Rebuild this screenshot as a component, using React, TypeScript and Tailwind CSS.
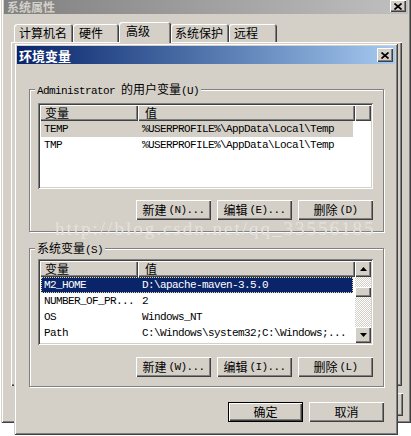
import React from "react";

const frame =
  "shadow-[inset_1px_1px_#d4d0c8,inset_-1px_-1px_#404040,inset_2px_2px_#fff,inset_-2px_-2px_#808080]";
const raised =
  "shadow-[inset_1px_1px_#fff,inset_-1px_-1px_#404040,inset_-2px_-2px_#808080]";
const defBtn =
  "shadow-[inset_0_0_0_1px_#000,inset_2px_2px_#fff,inset_-2px_-2px_#404040,inset_-3px_-3px_#808080]";
const sunken =
  "shadow-[inset_1px_1px_#808080,inset_-1px_-1px_#fff,inset_2px_2px_#404040,inset_-2px_-2px_#d4d0c8]";
const mono = "font-['Liberation_Mono',monospace] text-[11px] tracking-[-0.6px]";

const CloseBtn = ({ h = "h-[14px]" }: { h?: string }) => (
  <div className={`flex ${h} w-[16px] items-center justify-center bg-[#d4d0c8] ${raised}`}>
    <svg width="8" height="7" viewBox="0 0 8 7">
      <path d="M0.5 0.5L7.5 6.5M7.5 0.5L0.5 6.5" stroke="#000" strokeWidth="1.7" />
    </svg>
  </div>
);

type BtnProps = { label: string; hot?: string; ell?: boolean; def?: boolean };

const Btn = ({ label, hot, ell, def }: BtnProps) => (
  <div
    className={`flex h-[20px] w-[75px] items-center justify-center bg-[#d4d0c8] leading-none ${
      def ? defBtn : raised
    }`}
  >
    <span>{label}</span>
    {hot && (
      <span className={`ml-[2px] ${mono}`}>
        ({hot}){ell ? "..." : ""}
      </span>
    )}
  </div>
);

const Arrow = ({ down }: { down?: boolean }) => (
  <div className={`flex h-[16px] w-[16px] items-center justify-center bg-[#d4d0c8] ${raised}`}>
    <svg width="7" height="4" viewBox="0 0 7 4">
      <polygon points={down ? "0,0 7,0 3.5,4" : "0,4 7,4 3.5,0"} fill="#000" />
    </svg>
  </div>
);

type ListProps = { rows: string[][]; focused?: boolean; scroll?: boolean };

const ListView = ({ rows, focused, scroll }: ListProps) => (
  <div className={`ml-[8px] flex h-[86px] w-[335px] bg-white p-[2px] ${sunken}`}>
    <div className="flex min-w-0 flex-1 flex-col overflow-hidden">
      <div className="flex h-[16px] shrink-0 bg-[#d4d0c8] leading-[16px]">
        <div className={`w-[98px] pl-[5px] ${raised}`}>变量</div>
        <div className={`w-[217px] pl-[7px] ${raised}`}>值</div>
        {!scroll && <div className={`flex-1 ${raised}`} />}
      </div>
      {rows.map((r, i) => {
        let bg = "";
        if (i === 0) {
          bg = focused
            ? "bg-[#0a246a] text-white outline-1 outline-dotted outline-[#e8d8a0] -outline-offset-1"
            : "bg-[#d4d0c8]";
        }
        return (
          <div
            key={r[0]}
            className={`ml-[1px] flex h-[16px] w-[312px] shrink-0 items-center whitespace-nowrap ${mono} ${bg}`}
          >
            <div className="w-[101px] pl-[3px]">{r[0]}</div>
            <div>{r[1]}</div>
          </div>
        );
      })}
    </div>
    {scroll && (
      <div className="flex w-[16px] flex-col bg-[repeating-conic-gradient(#d4d0c8_0_25%,#fff_0_50%)] bg-[length:2px_2px]">
        <Arrow />
        <div className={`mt-[10px] h-[10px] w-[16px] bg-[#d4d0c8] ${raised}`} />
        <div className="flex-1" />
        <Arrow down />
      </div>
    )}
  </div>
);

const Group = ({
  label,
  children,
  className,
}: {
  label: React.ReactNode;
  children: React.ReactNode;
  className: string;
}) => (
  <div
    className={`relative border border-[#808080] shadow-[inset_1px_1px_#fff,1px_1px_#fff] ${className}`}
  >
    <div className="absolute -top-[8px] left-[5px] bg-[#d4d0c8] px-[2px] leading-[14px] whitespace-nowrap">
      {label}
    </div>
    {children}
  </div>
);

const userRows = [
  ["TEMP", "%USERPROFILE%\\AppData\\Local\\Temp"],
  ["TMP", "%USERPROFILE%\\AppData\\Local\\Temp"],
];

const sysRows = [
  ["M2_HOME", "D:\\apache-maven-3.5.0"],
  ["NUMBER_OF_PR...", "2"],
  ["OS", "Windows_NT"],
  ["Path", "C:\\Windows\\system32;C:\\Windows;..."],
];

const tabs = [
  { t: "计算机名", w: "w-[59px] pl-[5px]" },
  { t: "硬件", w: "w-[46px] pl-[6px]" },
  { t: "高级", w: "w-[52px] pl-[7px]", sel: true },
  { t: "系统保护", w: "w-[58px] pl-[4px]" },
  { t: "远程", w: "w-[48px] pl-[5px]" },
];

export default function App() {
  return (
    <div className="relative h-[436px] w-[411px] overflow-hidden bg-white font-['Noto_Sans_CJK_SC',sans-serif] text-[12px] text-black">
      {/* 系统属性 (inactive, behind) */}
      <div className="absolute left-[1px] top-0 flex h-[423px] w-[410px] flex-col bg-[#d4d0c8] px-[3px] pb-[3px] shadow-[inset_1px_0_#d4d0c8,inset_-1px_-1px_#404040,inset_2px_0_#fff,inset_-2px_-2px_#808080]">
        <div className="flex h-[14px] shrink-0 items-start justify-between bg-gradient-to-r from-[#808080] to-[#c0c0c0] pl-[3px] pr-[2px]">
          <span className="mt-[1px] text-[12px] font-bold leading-[12px] text-[#d4d0c8]">系统属性</span>
          <CloseBtn h="h-[12px]" />
        </div>
        <div className="ml-[10px] mt-[8px] flex h-[20px] items-end">
          {tabs.map((tab) => (
            <div
              key={tab.t}
              className={`rounded-t-[3px] bg-[#d4d0c8] leading-[18px] shadow-[inset_1px_1px_#fff,inset_-1px_0_#404040,inset_-2px_0_#808080] ${tab.w} ${
                tab.sel ? "relative z-10 -mb-[1px] h-[21px]" : "h-[18px]"
              }`}
            >
              {tab.t}
            </div>
          ))}
        </div>
        <div className={`ml-[7px] h-[344px] w-[391px] ${raised}`} />
        <div className="mt-[7px] flex justify-end pr-[5px]">
          <div className={`h-[23px] w-[75px] ${raised}`} />
        </div>
      </div>

      {/* 环境变量 */}
      <div className={`absolute left-[14px] top-[43px] flex h-[392px] w-[384px] flex-col bg-[#d4d0c8] p-[3px] ${frame}`}>
        <div className="flex h-[18px] shrink-0 items-center justify-between bg-gradient-to-r from-[#0a246a] to-[#a6caf0] pl-[2px] pr-[2px]">
          <span className="text-[13px] font-bold leading-none text-white">环境变量</span>
          <CloseBtn />
        </div>
        <div className="flex flex-col pl-[12px] pr-[11px]">
          <Group
            className="mt-[25px] h-[143px] pt-[13px]"
            label={
              <>
                <span className={mono}>Administrator </span>的用户变量<span className={mono}>(U)</span>
              </>
            }
          >
            <ListView rows={userRows} />
            <div className="mt-[11px] flex justify-end gap-[6px] pr-[10px]">
              <Btn label="新建" hot="N" ell />
              <Btn label="编辑" hot="E" ell />
              <Btn label="删除" hot="D" />
            </div>
          </Group>
          <Group
            className="mt-[16px] h-[139px] pt-[10px]"
            label={
              <>
                系统变量<span className={mono}>(S)</span>
              </>
            }
          >
            <ListView rows={sysRows} focused scroll />
            <div className="mt-[12px] flex justify-end gap-[6px] pr-[10px]">
              <Btn label="新建" hot="W" ell />
              <Btn label="编辑" hot="I" ell />
              <Btn label="删除" hot="L" />
            </div>
          </Group>
          <div className="mt-[15px] flex justify-end gap-[6px]">
            <Btn label="确定" def />
            <Btn label="取消" />
          </div>
        </div>
      </div>

      {/* watermark */}
      <div className="pointer-events-none absolute left-[55px] top-[219px] font-['Liberation_Serif',serif] text-[19px] leading-none tracking-[2px] text-[#e4e1dc]">
        http://blog.csdn.net/qq_33556185
      </div>
    </div>
  );
}
